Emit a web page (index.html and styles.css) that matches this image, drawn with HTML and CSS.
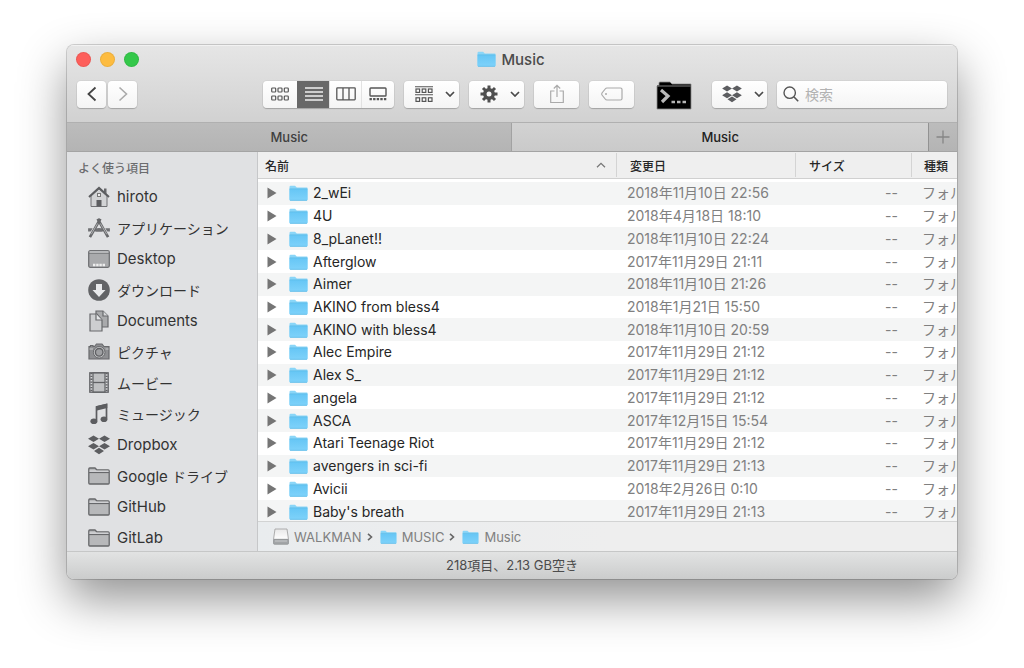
FILE: index.html
```html
<!DOCTYPE html>
<html lang="ja">
<head>
<meta charset="utf-8">
<title>Music</title>
<link rel="stylesheet" href="styles.css">
</head>
<body>
<svg class="defs" aria-hidden="true">
  <defs>
    <linearGradient id="blue" x1="0" y1="0" x2="0" y2="1"><stop offset="0" stop-color="#66c6f5"/><stop offset="1" stop-color="#7ed2fa"/></linearGradient>
    <linearGradient id="metal" x1="0" y1="0" x2="0" y2="1"><stop offset="0" stop-color="#e8e8e8"/><stop offset="1" stop-color="#fff"/></linearGradient>
  </defs>
  <symbol id="folder" viewBox="0 0 19 16"><path d="M.5 2Q.5.8 1.600.8H6L7.800 2.500H18Q18.500 2.500 18.500 3.200V14.500Q18.500 15.500 17.500 15.500H1.500Q.5 15.500.5 14.500Z" fill="#8ad6f8"/><path d="M.5 4H18.500V14.500Q18.500 15.500 17.500 15.500H1.500Q.5 15.500.5 14.500Z" fill="url(#blue)"/><path d="M1 15.300H18M.6 3.800H18.400" stroke="#58b4e0" stroke-width=".6"/></symbol>
  <symbol id="tri" viewBox="0 0 10 12"><path d="M.5.5V11.500L9.500 6Z" fill="#757575"/></symbol>
  <symbol id="chev" viewBox="0 0 10 6"><path d="M1 1L5 5L9 1" fill="none" stroke="#4a4a4a" stroke-width="1.700"/></symbol>
  <symbol id="dropbox" viewBox="0 0 22 20"><path d="M5.500.5L11 3.800L5.500 7.100L0 3.800ZM16.500.5L22 3.800L16.500 7.100L11 3.800ZM5.500 8L11 11.300L5.500 14.600L0 11.300ZM16.500 8L22 11.300L16.500 14.600L11 11.300ZM11 12.800L16 15.900L11 19.200L6 15.900Z" fill="#5c5d60"/></symbol>
  <symbol id="gfolder" viewBox="0 0 22 18"><path d="M.8 16V2Q.8 1 1.800 1H7L9 3H20.200Q21.200 3 21.200 4V16Q21.200 17 20.200 17H1.800Q.8 17 .8 16Z" fill="#b7b8ba" stroke="#66676a" stroke-width="1.300"/><path d="M1.500 4.200H20.500" stroke="#e2e3e5" stroke-width="1.300"/><path d="M1 5.500H21" stroke="#66676a" stroke-width="1.200"/></symbol>
</svg>

<main class="window">
  <header class="toolbar">
    <div class="titlebar">
      <div class="lights">
        <button class="light red" aria-label="閉じる"></button>
        <button class="light yellow" aria-label="しまう"></button>
        <button class="light green" aria-label="拡大"></button>
      </div>
      <h1 class="title"><svg class="folder-icon"><use href="#folder"/></svg>Music</h1>
    </div>
    <div class="tools">
      <div class="nav">
        <button class="btn nav-btn" aria-label="戻る"><svg width="10" height="16" viewBox="0 0 10 16"><path d="M8.500 1.500L1.500 8L8.500 14.500" fill="none" stroke="#444" stroke-width="1.800"/></svg></button>
        <button class="btn nav-btn" aria-label="進む"><svg width="10" height="16" viewBox="0 0 10 16"><path d="M1.500 1.500L8.500 8L1.500 14.500" fill="none" stroke="#aaa" stroke-width="1.600"/></svg></button>
      </div>
      <div class="views">
        <button class="view" aria-label="アイコン表示"><svg width="18" height="14" viewBox="0 0 18 14"><g fill="none" stroke="#555" stroke-width="1.200"><rect x=".7" y="1" width="4" height="4" rx=".8"/><rect x="7" y="1" width="4" height="4" rx=".8"/><rect x="13.300" y="1" width="4" height="4" rx=".8"/><rect x=".7" y="9" width="4" height="4" rx=".8"/><rect x="7" y="9" width="4" height="4" rx=".8"/><rect x="13.300" y="9" width="4" height="4" rx=".8"/></g></svg></button>
        <button class="view on" aria-label="リスト表示"><svg width="18" height="14" viewBox="0 0 18 14"><path d="M0 1H18M0 5H18M0 9H18M0 13H18" stroke="#eee" stroke-width="1.400"/></svg></button>
        <button class="view" aria-label="カラム表示"><svg width="20" height="14" viewBox="0 0 20 14"><path d="M1.500.8H18.500Q19.200.8 19.200 1.500V12Q19.200 12.800 18.500 12.800H1.500Q.8 12.800.8 12V1.500Q.8.8 1.500.8ZM7 1V12.500M13 1V12.500" fill="none" stroke="#555" stroke-width="1.300"/></svg></button>
        <button class="view" aria-label="ギャラリー表示"><svg width="18" height="14" viewBox="0 0 18 14"><rect x="1" y="1" width="16" height="8" rx=".8" fill="none" stroke="#555" stroke-width="1.400"/><path d="M.5 12.200H17.500" stroke="#555" stroke-width="2.200" stroke-dasharray="2.400 1.200"/></svg></button>
      </div>
      <button class="btn menu" aria-label="グループ"><svg width="18" height="17" viewBox="0 0 18 17"><path d="M0 .8H18M0 8.700H18" stroke="#555" stroke-width="1.100"/><g fill="none" stroke="#555" stroke-width="1.200"><rect x="1" y="3" width="3.600" height="3.400"/><rect x="7.200" y="3" width="3.600" height="3.400"/><rect x="13.400" y="3" width="3.600" height="3.400"/><rect x="1" y="11.800" width="3.600" height="3.600"/><rect x="7.200" y="11.800" width="3.600" height="3.600"/><rect x="13.400" y="11.800" width="3.600" height="3.600"/></g></svg><svg class="chev"><use href="#chev"/></svg></button>
      <button class="btn menu" aria-label="アクション"><svg width="18" height="18" viewBox="-9 -9 18 18"><path d="M0-8.500V8.500M-8.500 0H8.500M-6-6L6 6M6-6L-6 6" stroke="#4f4f4f" stroke-width="3"/><circle r="4.300" fill="none" stroke="#4f4f4f" stroke-width="3.400"/><circle r="2.500" fill="#f8f8f8"/></svg><svg class="chev"><use href="#chev"/></svg></button>
      <button class="btn single" aria-label="共有"><svg width="14" height="20" viewBox="0 0 14 20"><path d="M4.500 7H.7V18.500H13.300V7H9.500M7 13V1.500M3.800 4.500L7 1.300L10.200 4.500" fill="none" stroke="#aaa" stroke-width="1.200"/></svg></button>
      <button class="btn single" aria-label="タグ"><svg width="22" height="14" viewBox="0 0 22 14"><path d="M6 1H19.500Q21 1 21 2.500V11.500Q21 13 19.500 13H6Q5 13 4.200 12L1 8Q.5 7 1 6L4.200 2Q5 1 6 1Z" fill="none" stroke="#aaa" stroke-width="1.200"/><circle cx="5" cy="7" r="1" fill="#aaa"/></svg></button>
      <button class="terminal" aria-label="ターミナル"><svg width="36" height="29" viewBox="0 0 36 29"><path d="M1 5H3V2Q3 1 4 1H14L16 3H35V28H1Z" fill="#000" stroke="#8b8b8b" stroke-width=".8"/><path d="M1 5H35" stroke="#555" stroke-width="1.500"/><path d="M5 9L12 15L6 21" fill="none" stroke="#b9b9b9" stroke-width="3.200"/><path d="M15.500 21H30" stroke="#b5b5b5" stroke-width="2.500" stroke-dasharray="3.500 2"/></svg></button>
      <button class="btn menu" aria-label="Dropbox"><svg width="20" height="18" viewBox="0 0 22 20"><use href="#dropbox" width="22" height="20"/></svg><svg class="chev"><use href="#chev"/></svg></button>
      <label class="search"><svg width="16" height="16" viewBox="0 0 16 16"><circle cx="6.700" cy="6.700" r="5.700" fill="none" stroke="#555" stroke-width="1.400"/><path d="M10.800 10.800L15.200 15.200" stroke="#555" stroke-width="1.600"/></svg><input class="search-input" type="search" placeholder="検索" aria-label="検索"></label>
    </div>
  </header>

  <nav class="tabs" aria-label="タブ">
    <button class="tab">Music</button>
    <button class="tab current">Music</button>
    <button class="tab add" aria-label="新規タブ"><svg width="14" height="14" viewBox="0 0 14 14"><path d="M7 .5V13.500M.5 7H13.500" stroke="#858585" stroke-width="1.300"/></svg></button>
  </nav>

  <div class="content">
    <aside class="sidebar">
      <h2 class="section">よく使う項目</h2>
      <ul class="places">
        <li><a class="place" href="#"><svg width="22" height="22" viewBox="0 0 22 22"><path d="M3 10L11 3L19 10V20.500H3Z" fill="#d2d3d5" stroke="#707174"/><path d="M16 2.500H18.500V8L16 5.500Z" fill="#66676a"/><path d="M1 11L11 1.800L21 11" fill="none" stroke="#5c5d60" stroke-width="2"/><path d="M8.500 14H13.500V20.500H8.500Z" fill="#5c5d60"/><rect x="9.500" y="7.500" width="3" height="3" fill="#eee" stroke="#777"/></svg>hiroto</a></li>
        <li><a class="place ja" href="#"><svg width="22" height="20" viewBox="0 0 24 22"><path d="M0 13H24" stroke="#707174" stroke-width="3.600"/><path d="M13 2L3 20M11 2L21 20" stroke="#e0e1e3" stroke-width="5"/><path d="M7.500 13H16.500" stroke="#707174" stroke-width="3.600"/><path d="M13.500 1L2 21" stroke="#66676a" stroke-width="3"/><path d="M10.500 1L22 21" stroke="#66676a" stroke-width="3"/><path d="M10.500 6L3.500 18M13.500 6L20.500 18" stroke="#c8c9cb" stroke-width=".8"/></svg>アプリケーション</a></li>
        <li><a class="place" href="#"><svg width="22" height="18" viewBox="0 0 22 18"><rect x=".7" y=".7" width="20.600" height="16.600" rx="1.500" fill="#a9aaac" stroke="#707174" stroke-width="1.300"/><path d="M1 3.200H21" stroke="#707174"/><path d="M1.500 2H20.500" stroke="#d5d6d8"/><path d="M5 15H17" stroke="#eee" stroke-width="2.500" stroke-dasharray="2.400 .8"/></svg>Desktop</a></li>
        <li><a class="place ja" href="#"><svg width="22" height="22" viewBox="0 0 22 22"><circle cx="11" cy="11" r="10.800" fill="#626366"/><path d="M8 5H14V11H17.500L11 18L4.500 11H8Z" fill="#e8e9eb"/></svg>ダウンロード</a></li>
        <li><a class="place" href="#"><svg width="20" height="22" viewBox="0 0 20 22"><g stroke="#68696c" stroke-width="1.200"><path d="M7 1H14L19 6V17H7Z" fill="#a9aaac"/><path d="M14 1V6H19" fill="#d8d9db"/><path d="M1 4H8L13 10V21H1Z" fill="#cdced0"/><path d="M7 4V10H13" fill="#e4e5e7"/></g></svg>Documents</a></li>
        <li><a class="place ja" href="#"><svg width="22" height="17" viewBox="0 0 22 17"><path d="M1 3.500H2.500V2.500H5V3.500H6.500L8.500 1H14L16 3.500H21V16H1Z" fill="#8e8f92" stroke="#68696c" stroke-width="1.200"/><circle cx="11.200" cy="9.300" r="5.800" fill="#c9cacc" stroke="#68696c"/><circle cx="11.200" cy="9.300" r="3.800" fill="#9fa0a3" stroke="#606164" stroke-width="1.400"/><path d="M1.500 6H5M17.500 6H20.500" stroke="#c9cacc"/></svg>ピクチャ</a></li>
        <li><a class="place ja" href="#"><svg width="20" height="21" viewBox="0 0 20 21"><rect x=".8" y=".8" width="18.400" height="19.400" fill="#d7d8da" stroke="#606164" stroke-width="1.300"/><rect x="4" y="1" width="12" height="19" fill="#bfc0c2" stroke="#606164" stroke-width="1.200"/><path d="M4 10.500H16" stroke="#606164" stroke-width="1.300"/><path d="M2.400 1V20M17.600 1V20" stroke="#606164" stroke-width="2" stroke-dasharray="1.300 1.500"/></svg>ムービー</a></li>
        <li><a class="place ja" href="#"><svg width="18" height="22" viewBox="0 0 18 22"><path d="M6.500 17.500V4L16.500 1.500V15.500" fill="none" stroke="#5c5d60" stroke-width="1.700"/><path d="M6 3.200L17.300.4V5L6 7.800Z" fill="#5c5d60"/><ellipse cx="3.900" cy="18.300" rx="3.500" ry="2.800" fill="#5c5d60"/><ellipse cx="14" cy="16.300" rx="3.400" ry="2.800" fill="#5c5d60"/></svg>ミュージック</a></li>
        <li><a class="place" href="#"><svg width="22" height="20"><use href="#dropbox"/></svg>Dropbox</a></li>
        <li><a class="place" href="#"><svg width="22" height="18"><use href="#gfolder"/></svg><span>Google <span class="kana">ドライブ</span></span></a></li>
        <li><a class="place" href="#"><svg width="22" height="18"><use href="#gfolder"/></svg>GitHub</a></li>
        <li><a class="place" href="#"><svg width="22" height="18"><use href="#gfolder"/></svg>GitLab</a></li>
      </ul>
    </aside>

    <section class="main">
      <div class="list">
        <table class="files">
          <colgroup><col><col class="c-date"><col class="c-size"><col class="c-kind"></colgroup>
          <thead><tr>
            <th><span class="head">名前<svg width="10" height="6" viewBox="0 0 10 6"><path d="M1 5.300L5 1.300L9 5.300" fill="none" stroke="#777" stroke-width="1.300"/></svg></span></th>
            <th><span class="head">変更日</span></th>
            <th><span class="head">サイズ</span></th>
            <th><span class="head">種類</span></th>
          </tr></thead>
          <tbody>
            <tr><td><span class="name"><button class="tri" aria-label="開く"><svg><use href="#tri"/></svg></button><svg class="folder-icon"><use href="#folder"/></svg>2_wEi</span></td><td>2018年11月10日 22:56</td><td>--</td><td>フォルダ</td></tr>
            <tr><td><span class="name"><button class="tri" aria-label="開く"><svg><use href="#tri"/></svg></button><svg class="folder-icon"><use href="#folder"/></svg>4U</span></td><td>2018年4月18日 18:10</td><td>--</td><td>フォルダ</td></tr>
            <tr><td><span class="name"><button class="tri" aria-label="開く"><svg><use href="#tri"/></svg></button><svg class="folder-icon"><use href="#folder"/></svg>8_pLanet!!</span></td><td>2018年11月10日 22:24</td><td>--</td><td>フォルダ</td></tr>
            <tr><td><span class="name"><button class="tri" aria-label="開く"><svg><use href="#tri"/></svg></button><svg class="folder-icon"><use href="#folder"/></svg>Afterglow</span></td><td>2017年11月29日 21:11</td><td>--</td><td>フォルダ</td></tr>
            <tr><td><span class="name"><button class="tri" aria-label="開く"><svg><use href="#tri"/></svg></button><svg class="folder-icon"><use href="#folder"/></svg>Aimer</span></td><td>2018年11月10日 21:26</td><td>--</td><td>フォルダ</td></tr>
            <tr><td><span class="name"><button class="tri" aria-label="開く"><svg><use href="#tri"/></svg></button><svg class="folder-icon"><use href="#folder"/></svg>AKINO from bless4</span></td><td>2018年1月21日 15:50</td><td>--</td><td>フォルダ</td></tr>
            <tr><td><span class="name"><button class="tri" aria-label="開く"><svg><use href="#tri"/></svg></button><svg class="folder-icon"><use href="#folder"/></svg>AKINO with bless4</span></td><td>2018年11月10日 20:59</td><td>--</td><td>フォルダ</td></tr>
            <tr><td><span class="name"><button class="tri" aria-label="開く"><svg><use href="#tri"/></svg></button><svg class="folder-icon"><use href="#folder"/></svg>Alec Empire</span></td><td>2017年11月29日 21:12</td><td>--</td><td>フォルダ</td></tr>
            <tr><td><span class="name"><button class="tri" aria-label="開く"><svg><use href="#tri"/></svg></button><svg class="folder-icon"><use href="#folder"/></svg>Alex S_</span></td><td>2017年11月29日 21:12</td><td>--</td><td>フォルダ</td></tr>
            <tr><td><span class="name"><button class="tri" aria-label="開く"><svg><use href="#tri"/></svg></button><svg class="folder-icon"><use href="#folder"/></svg>angela</span></td><td>2017年11月29日 21:12</td><td>--</td><td>フォルダ</td></tr>
            <tr><td><span class="name"><button class="tri" aria-label="開く"><svg><use href="#tri"/></svg></button><svg class="folder-icon"><use href="#folder"/></svg>ASCA</span></td><td>2017年12月15日 15:54</td><td>--</td><td>フォルダ</td></tr>
            <tr><td><span class="name"><button class="tri" aria-label="開く"><svg><use href="#tri"/></svg></button><svg class="folder-icon"><use href="#folder"/></svg>Atari Teenage Riot</span></td><td>2017年11月29日 21:12</td><td>--</td><td>フォルダ</td></tr>
            <tr><td><span class="name"><button class="tri" aria-label="開く"><svg><use href="#tri"/></svg></button><svg class="folder-icon"><use href="#folder"/></svg>avengers in sci-fi</span></td><td>2017年11月29日 21:13</td><td>--</td><td>フォルダ</td></tr>
            <tr><td><span class="name"><button class="tri" aria-label="開く"><svg><use href="#tri"/></svg></button><svg class="folder-icon"><use href="#folder"/></svg>Avicii</span></td><td>2018年2月26日 0:10</td><td>--</td><td>フォルダ</td></tr>
            <tr><td><span class="name"><button class="tri" aria-label="開く"><svg><use href="#tri"/></svg></button><svg class="folder-icon"><use href="#folder"/></svg>Baby's breath</span></td><td>2017年11月29日 21:13</td><td>--</td><td>フォルダ</td></tr>
          </tbody>
        </table>
      </div>
      <div class="path">
        <svg width="16" height="17" viewBox="0 0 16 17"><path d="M2 1H14L15.500 11.500H.5Z" fill="url(#metal)" stroke="#a5a5a5" stroke-width=".9"/><rect x=".5" y="11.300" width="15" height="5" rx="1" fill="#a2a5a7" stroke="#8b8e90" stroke-width=".7"/><path d="M2 13H14" stroke="#c7c9cb"/></svg>
        <span>WALKMAN</span>
        <svg class="sep" width="6" height="8" viewBox="0 0 6 8"><path d="M1 .8L4.500 4L1 7.200" fill="none" stroke="#666" stroke-width="1.600"/></svg>
        <svg class="crumb-folder"><use href="#folder"/></svg>
        <span>MUSIC</span>
        <svg class="sep" width="6" height="8" viewBox="0 0 6 8"><path d="M1 .8L4.500 4L1 7.200" fill="none" stroke="#666" stroke-width="1.600"/></svg>
        <svg class="crumb-folder"><use href="#folder"/></svg>
        <span>Music</span>
      </div>
    </section>
  </div>
  <footer class="status">218項目、2.13 GB空き</footer>
</main>
</body>
</html>
```

FILE: styles.css
```css
* { box-sizing: border-box; }
body {
  margin: 0;
  padding: 45px 67px 88px;
  background: #fff;
  font-family: Inter, "Noto Sans CJK JP", sans-serif;
  font-size: 15px;
  color: #262626;
  overflow: hidden;
}
button {
  margin: 0;
  padding: 0;
  border: 0;
  background: none;
  font: inherit;
  color: inherit;
}
svg { display: block; flex: none; }
.defs { position: absolute; width: 0; height: 0; }

.window {
  border-radius: 7px;
  overflow: hidden;
  background: #ececec;
  box-shadow: 0 0 0 1px rgba(0, 0, 0, .16), 0 20px 48px rgba(0, 0, 0, .43);
}

/* Title bar and toolbar */
.toolbar {
  height: 77px;
  background: linear-gradient(#e6e6e6, #d1d1d1);
  box-shadow: inset 0 1px #f2f2f2;
}
.titlebar {
  display: grid;
  grid-template-columns: 1fr auto 1fr;
  align-items: center;
  height: 28px;
  padding: 0 11px 0 9px;
}
.lights { display: flex; gap: 9px; }
.light { width: 15px; height: 15px; border-radius: 50%; box-shadow: inset 0 0 0 1px rgba(0, 0, 0, .07); }
.red { background: #fd5f5b; }
.yellow { background: #fdbc40; }
.green { background: #34c84a; }
.title {
  display: flex;
  align-items: center;
  gap: 5px;
  margin: 0;
  font-size: 15px;
  font-weight: 500;
  color: #4b4b4b;
}
.folder-icon { width: 19px; height: 16px; }
.tools {
  display: flex;
  align-items: center;
  gap: 10px;
  height: 42px;
  padding: 0 10px;
}
.nav { display: flex; gap: 2px; margin-right: 116px; }
.btn, .views, .search {
  height: 27px;
  border-radius: 4px;
  background: linear-gradient(#fff, #f4f4f4);
  box-shadow: 0 0 0 1px rgba(0, 0, 0, .04), 0 1px 1px rgba(0, 0, 0, .2);
}
.btn { display: flex; align-items: center; justify-content: center; flex: none; }
.nav-btn { width: 29px; }
.views { display: grid; grid-template-columns: 34px 32px 32px 33px; flex: none; overflow: hidden; }
.view { display: flex; align-items: center; justify-content: center; }
.view + .view { border-left: 1px solid #e2e2e2; }
.view.on { background: #686868; border-color: #686868; }
.menu { width: 55px; gap: 12px; padding-left: 6px; }
.chev { width: 10px; height: 6px; }
.single { width: 45px; }
.terminal { flex: none; margin: 3px 10px 0 12px; }
.search { display: flex; align-items: center; gap: 6px; flex: 1; min-width: 0; padding: 0 6px; }
.search-input {
  flex: 1;
  min-width: 0;
  padding: 0;
  border: 0;
  background: none;
  font: inherit;
  font-size: 14px;
  outline: 0;
}
.search-input::placeholder { color: #b2b2b2; }

/* Tabs */
.tabs {
  display: grid;
  grid-template-columns: 16fr 15fr 29px;
  height: 30px;
  border-top: 1px solid #b0b0b0;
  border-bottom: 1px solid #a4a4a4;
}
.tab {
  font-size: 13px;
  font-weight: 500;
  color: #404040;
  background: linear-gradient(#bcbcbc, #b4b4b4);
}
.tab.current { color: #222; background: linear-gradient(#d2d2d2, #cacaca); border-left: 1px solid #a2a2a2; }
.tab.add { display: flex; align-items: center; justify-content: center; border-left: 1px solid #929292; }

/* Sidebar */
.content {
  display: grid;
  grid-template-columns: 191px 1fr;
  grid-template-rows: minmax(0, 1fr);
  height: 399px;
}
.sidebar { background: #e0e1e3; border-right: 1px solid #c6c7c9; overflow: hidden; }
.section {
  margin: 0;
  padding: 8px 0 0 11px;
  font-size: 12px;
  line-height: 18px;
  height: 29px;
  font-weight: 500;
  color: #6b6c6e;
}
.places { list-style: none; margin: 0; padding: 0; }
.place {
  display: grid;
  grid-template-columns: 24px 1fr;
  justify-items: start;
  align-items: center;
  column-gap: 6px;
  height: 31px;
  padding-left: 20px;
  color: #333;
  text-decoration: none;
  white-space: nowrap;
}
.place svg { justify-self: center; }
.ja, .kana { font-size: 14px; }

/* File list */
.main { display: flex; flex-direction: column; min-width: 0; }
.list { flex: 1; min-height: 0; overflow: hidden; background: #fff; }
.files { width: 100%; height: 371px; table-layout: fixed; border-collapse: collapse; }
.c-date { width: 179px; }
.c-size { width: 116px; }
.c-kind { width: 46px; }
.files th {
  height: 30px;
  padding: 0 0 4px;
  text-align: left;
  font-size: 12px;
  font-weight: 500;
  background: linear-gradient(#efefef 26px, #d0d0d0 26px, #d0d0d0 27px, #fff 27px);
}
.head {
  display: flex;
  align-items: center;
  justify-content: space-between;
  height: 24px;
  padding: 0 10px 0 13px;
  border-left: 1px solid #d4d4d4;
  white-space: nowrap;
}
th:first-child .head { border-left: 0; padding-left: 7px; }
th:last-child .head { padding-right: 0; padding-left: 12px; }
.files td {
  padding: 0 0 0 11px;
  font-size: 14px;
  line-height: 20px;
  color: #808080;
  white-space: nowrap;
  overflow: hidden;
}
.files td:nth-child(3) { padding: 0 13px; text-align: right; }
.files td:first-child { padding-left: 9px; color: #262626; }
.files tbody tr:nth-child(odd) { background: #f4f5f5; }
.name { display: flex; align-items: center; height: 20px; gap: 5px; }
.tri { width: 17px; }
.tri svg { width: 10px; height: 12px; }

/* Path and status bars */
.path {
  display: flex;
  flex: none;
  align-items: center;
  gap: 5px;
  height: 30px;
  padding-left: 15px;
  border-top: 1px solid #d2d3d3;
  background: linear-gradient(90deg, #e9ecee, #eee 50%);
  font-size: 13px;
  color: #808080;
}
.sep { margin-right: 2px; }
.crumb-folder { width: 17px; height: 14px; }
.status {
  height: 28px;
  line-height: 27px;
  border-top: 1px solid #c6c7c7;
  background: linear-gradient(#e2e3e3, #cbcccc);
  text-align: center;
  font-size: 13px;
  color: #4c4c4c;
}
```
